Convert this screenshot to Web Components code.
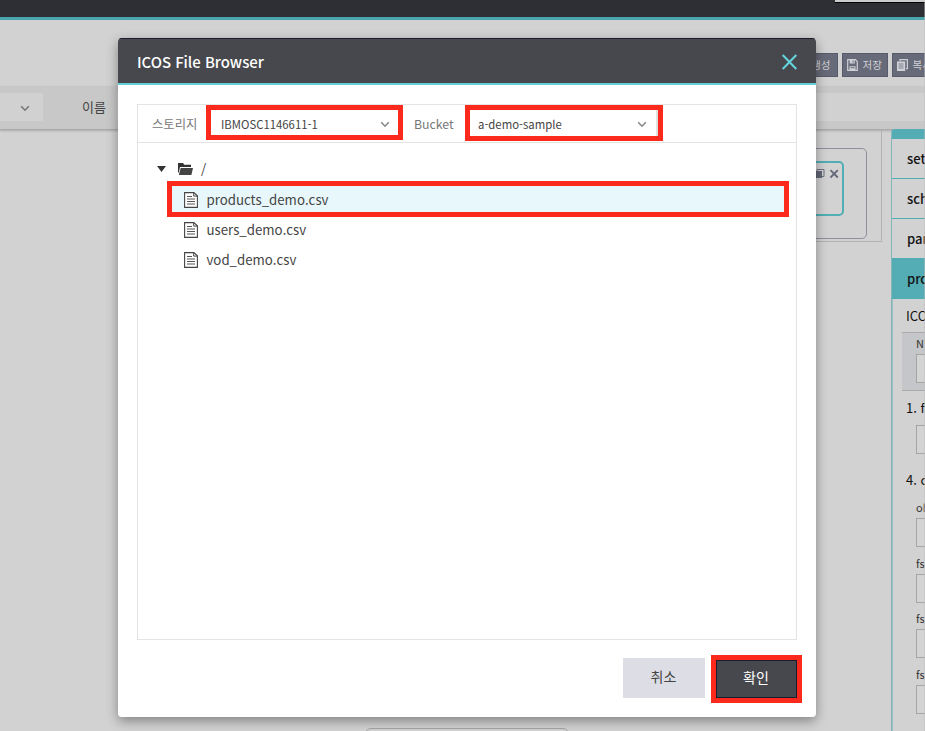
<!DOCTYPE html>
<html lang="ko"><head><meta charset="utf-8"><title>ICOS File Browser</title>
<style>
html,body{margin:0;height:100%;overflow:hidden}
body{font-family:"Noto Sans CJK KR","Noto Sans",sans-serif;font-size:13px;color:#333;background:#d2d2d2}
</style></head><body>
<app-shell></app-shell>
<script>
const define=(name,html)=>customElements.define(name,class extends HTMLElement{
  constructor(){super();this.attachShadow({mode:'open'}).innerHTML='<style>*{box-sizing:border-box}:host{box-sizing:border-box}</style>'+html;}
});

define('chevron-icon',`<style>:host{display:block;width:10px;height:7px}svg{display:block}</style>
<svg width="10" height="7" viewBox="0 0 10 7"><path d="M1.2 1.2 5 5.2 8.8 1.2" fill="none" stroke="currentColor" stroke-width="1.6"/></svg>`);

define('tool-button',`<style>:host{display:flex;align-items:center;gap:5px;height:24px;padding:0 5px 1px 4px;background:#676a78;border:1px solid #575b6c;color:#d0d1d6;font-size:10.5px;white-space:nowrap;flex:none;line-height:20px}
::slotted(svg){display:block;flex:none}</style><slot></slot>`);

define('filter-bar',`<style>:host{display:flex;height:44px;padding:7px 0 8px;background:#c8c8c8;border-bottom:1px solid #aaa;box-shadow:0 1px 2px #aaa;flex:none}
.sel{width:43px;background:#d1d1d1;padding:12px 0 0 20px;color:#777}
.lab{width:74px;padding-left:39px;line-height:27px;font-size:13px;color:#444}
.inp{flex:1;background:#d1d1d1}</style>
<div class="sel"><chevron-icon></chevron-icon></div><div class="lab">이름</div><div class="inp"></div>`);

define('panel-tab',`<style>:host{display:block;height:40px;border-bottom:1px solid #50adb3;padding-left:15px;font-size:13px;font-weight:500;line-height:39px;color:#111;white-space:nowrap}
:host([active]){background:#54adb4}</style><slot></slot>`);

define('panel-field',`<style>:host{display:block;padding-left:23px;font-size:11px;color:#333;white-space:nowrap;height:55.7px}
div{line-height:15px;height:18px}i{display:block;width:60px;height:29px;border:1px solid #a5a5a5;background:#d4d4d4}</style><div><slot></slot></div><i></i>`);

define('side-panel',`<style>:host{display:block;width:150px;height:640px;background:#d2d2d2;color:#222;border-left:1px solid #82b5b9;border-top:10px solid #54adb4;border-top-left-radius:4px}
h4{margin:0;font-size:13px;font-weight:400;padding-left:13px;color:#111;white-space:nowrap}
.rest{border-left:1px solid #9bbfc2;height:470px}
.t{height:33px;line-height:34px}.g{margin-left:9px;height:59px;background:#c5c6c9;border:solid #aaa;border-width:1px 0;padding-top:3px}
.g panel-field{padding-left:14px}.one{height:34px;line-height:34px}
.box{margin-left:23px;height:29px;border:1px solid #a5a5a5;background:#d4d4d4}.four{height:46px;line-height:52px}</style>
<panel-tab>set</panel-tab><panel-tab>sch</panel-tab><panel-tab>par</panel-tab><panel-tab active>pro</panel-tab>
<div class="rest"><h4 class="t">ICOS</h4><div class="g"><panel-field>N</panel-field></div>
<h4 class="one">1. f</h4><div class="box"></div><h4 class="four">4. c</h4>
<panel-field>ob</panel-field><panel-field>fs</panel-field><panel-field>fs</panel-field><panel-field>fs</panel-field></div>`);

define('flow-canvas',`<style>:host{display:block;position:relative;flex:1;height:601px;overflow:hidden}
div{position:absolute}.f{right:9px;top:-4px;width:200px;height:116px;border:1px solid #b2b2b2}
.n{right:24px;top:18px;width:180px;height:91px;border:1px solid #90909c;border-radius:5px}
.k{right:47px;top:31px;width:140px;height:55px;border:2px solid #50aeb4;border-radius:5px}
svg{position:absolute;right:3px;top:6px}.b{left:365px;top:598px;width:204px;height:30px;border:1px solid #a5a5a5;border-radius:6px}</style>
<div class="f"></div><div class="n"></div><div class="k"><svg width="25" height="10" viewBox="0 0 25 10"><path d="M3 .5h7v7H3z" fill="none" stroke="#6c7080"/><path d="M1 2h7v7H1z" fill="#626676"/><path d="m16.5 1.2 7.3 7.3m0-7.3-7.3 7.3" stroke="#626676" stroke-width="1.8"/></svg></div><div class="b"></div>`);

define('select-box',`<style>:host{display:flex;align-items:center;justify-content:space-between;border:5px solid #fc2a1c;background:#fff;font-size:11.35px;color:#444;padding:2px 8px 0 10px;flex:none}
chevron-icon{color:#888}</style><span><slot></slot></span><chevron-icon></chevron-icon>`);

define('file-row',`<style>:host{display:flex;align-items:center;height:30px;padding-left:46px;gap:8.5px;font-size:13.25px;color:#444;flex:none}
:host([selected]){height:36px;margin:-3px 7px -3px 29px;padding:1px 0 0 12px;border:5px solid #fc2a1c;background:#e8f7fc}
:host(:not([selected])){padding-top:1px}
svg{display:block;flex:none}span{line-height:20px}</style>
<svg width="14" height="16" viewBox="0 0 14 16"><path d="M.6.6h9.3l3.5 3.2v11.6H.6z" fill="#fff" stroke="#444" stroke-width="1.1"/><path d="M9.7.6v3.5h3.7" fill="none" stroke="#444"/><path d="M3 4.5h5M3 7h8M3 9.5h8M3 12h8" stroke="#555"/></svg><span><slot></slot></span>`);

define('action-button',`<style>:host{display:flex;align-items:center;justify-content:center;width:82px;height:40px;margin-top:3px;background:#dddee5;color:#444;font-size:14px}
:host([primary]){width:91px;height:48px;margin:0;border:5px solid #fc2a1c;background:#47484d;color:#fff;box-shadow:inset 0 0 0 1px #1b1c2c}
span{line-height:20px;margin:-5px 1px 0 0}</style><span><slot></slot></span>`);

define('file-dialog',`<style>:host{display:flex;flex-direction:column;width:698px;height:679px;background:#fff;border-radius:4px;overflow:hidden}
header{height:47px;flex:none;display:flex;align-items:center;justify-content:space-between;padding:1px 18px 0 19px;background:#47484d;border-bottom:2px solid #65cfd7;border-top:1px solid #1c1d2c;color:#fff;font-size:14.9px;font-weight:500}
header span{margin-top:-1px}
.main{margin:19px 19px 0;height:536px;border:1px solid #e4e4e4;display:flex;flex-direction:column}
.bar{height:38px;flex:none;border-bottom:1px solid #e4e4e4;display:flex;color:#777;font-size:12.3px;line-height:38px}
.a{width:68px;padding-left:14px}.b{width:62px;padding-left:11px}
.root{display:flex;align-items:center;height:28px;margin-top:12px;margin-bottom:1px;padding-left:19px;color:#444;font-size:13.3px;flex:none}
.root .fold{margin:0 8px 0 12px}svg{display:block}
footer{display:flex;gap:6px;justify-content:flex-end;padding:15px 14px 0 0}
.s1{width:197px;height:35px;line-height:24px;padding-top:3px}.s2{width:198px;height:36px;padding-left:8px;padding-right:11px;box-shadow:inset -2px 0 #e0e0e0}</style>
<header><span>ICOS File Browser</span><svg width="17" height="16" viewBox="0 0 17 16"><path d="m1.7 1 13.6 14M15.3 1 1.7 15" stroke="#65d4df" stroke-width="2"/></svg></header>
<div class="main"><div class="bar"><span class="a">스토리지</span><select-box class="s1">IBMOSC1146611-1</select-box><span class="b">Bucket</span><select-box class="s2">a-demo-sample</select-box></div>
<div class="root"><svg width="9" height="6" viewBox="0 0 9 6"><path d="M0 0h9L4.5 6z" fill="#333"/></svg><svg class="fold" width="15" height="12" viewBox="0 0 15 12"><path d="M0 0h5l1.2 1.7H13V4H2L.8 9.5H0z" fill="#333"/><path d="M2.7 5H15l-1.6 7H.8z" fill="#444"/></svg><span>/</span></div>
<file-row selected>products_demo.csv</file-row><file-row>users_demo.csv</file-row><file-row>vod_demo.csv</file-row></div>
<footer><action-button>취소</action-button><action-button primary>확인</action-button></footer>`);

define('app-shell',`<style>:host{display:flex;flex-direction:column;width:925px;height:731px;position:relative;overflow:hidden;background:#d2d2d2}
.top{height:20px;flex:none;background:#2e2f35;border-bottom:3px solid #4aa6ac}
.strip{position:absolute;left:835px;right:0;top:0;height:3px;background:#ccc;border-bottom:1px solid #000}
.tools{height:66px;flex:none;display:flex;gap:4px;padding:33px 0 0 791.5px}
.work{display:flex;height:601px;width:1042px;flex:none}
side-panel{margin-top:-1px;position:relative}
.edge{position:absolute;right:0;top:2px;bottom:0;width:1px;background:rgba(190,190,190,.5)}
file-dialog{position:absolute;left:118px;top:38px}.shade{position:absolute;left:118px;top:38px;width:698px;height:679px;border-radius:4px;box-shadow:0 4px 12px rgba(0,0,0,.38)}
.g{width:46px;justify-content:flex-end;padding-right:6px}.flow{width:891px;flex:none}</style>
<div class="top"></div><div class="strip"></div>
<div class="tools"><tool-button class="g">생성</tool-button>
<tool-button style="width:46px"><svg width="11" height="12" viewBox="0 0 11 12"><path d="M.7.7h7.8l1.8 2v8.6H.7z" fill="none" stroke="#d0d1d6" stroke-width="1.2"/><path d="M2.7 1h5v3.6h-5zM2.5 7.2h6v4h-6z" fill="#d0d1d6"/><path d="M6 1.5v2M3.5 8.7h4" stroke="#676a78"/></svg>저장</tool-button>
<tool-button><svg width="11" height="12" viewBox="0 0 11 12"><path d="M3 2V.6h7.4v9H9" fill="none" stroke="#d0d1d6" stroke-width="1.2"/><path d="M0 2.4h8.2V12H0z" fill="#d0d1d6"/><path d="M1.5 5h5M1.5 7h5M1.5 9h5" stroke="#676a78" stroke-width=".8"/></svg>복사</tool-button></div>
<filter-bar></filter-bar><div class="work"><flow-canvas class="flow"></flow-canvas><side-panel></side-panel></div>
<div class="edge"></div><div class="shade"></div><file-dialog></file-dialog>`);
</script></body></html>
